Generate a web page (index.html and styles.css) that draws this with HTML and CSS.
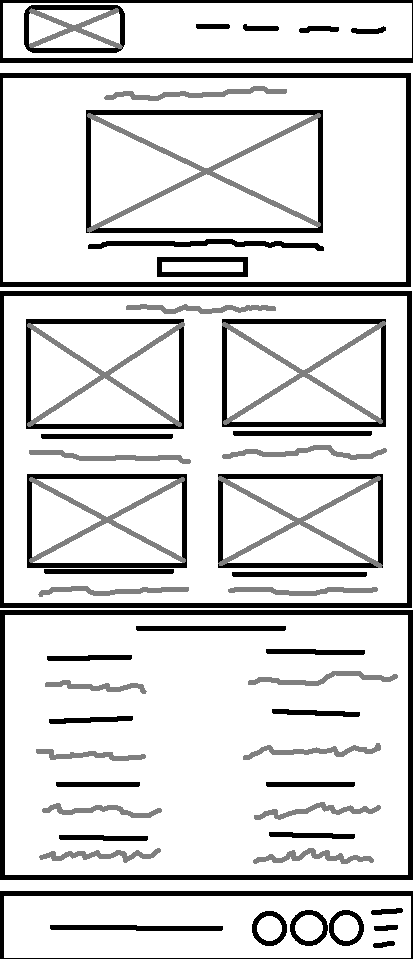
FILE: index.html
```html
<!DOCTYPE html>
<html lang="en">
<head>
<meta charset="utf-8">
<meta name="viewport" content="width=device-width, initial-scale=1">
<title>Wireframe</title>
<link rel="stylesheet" href="styles.css">
</head>
<body>
<header class="site-header">
  <a class="logo" href="#" aria-label="Home"><svg viewBox="9 9 381 165"><rect class="ink" x="80" y="22" width="287" height="129" rx="25"/><path class="pencil" d="M95 33L360 140M95 137L350 32"/></svg></a>
  <nav class="nav" aria-label="Main">
    <a class="nav-link" href="#" aria-label="Link 1"><svg viewBox="-72 9 159 165"><path class="ink" d="M-29 79H58"/></svg></a>
    <a class="nav-link" href="#" aria-label="Link 2"><svg viewBox="87 9 159 165"><path class="ink" d="M112 80L113 85H205"/></svg></a>
    <a class="nav-link" href="#" aria-label="Link 3"><svg viewBox="246 9 159 165"><path class="ink" d="M281 92H298L306 85H362L370 88H386"/></svg></a>
    <a class="nav-link" href="#" aria-label="Link 4"><svg viewBox="405 9 159 165"><path class="ink" d="M437 91L450 94H508L521 91L527 87"/></svg></a>
  </nav>
</header>

<main>
  <section class="hero">
    <h1><svg viewBox="-201 -6 1197 90"><path class="pencil" d="M110 53L130 52 140 44 158 44 165 40 185 40 190 52 235 52 240 56 260 56 275 50 285 43 325 43 340 40 358 46 395 46 402 43 460 43 475 34 540 34 553 26 582 26 592 34 645 34"/></svg></h1>
    <figure><svg viewBox="-201 84 1197 384"><rect class="ink" x="55.5" y="97.5" width="696" height="354"/><path class="pencil" d="M58 106L745 434M58 450L746 106"/></svg></figure>
    <p><svg viewBox="-201 468 1197 54"><path class="ink" d="M60 500L92 500 100 494 118 490 310 490 315 493 358 493 365 490 408 490 413 484 485 484 500 493 520 493 527 490 582 490 600 497 618 490 632 490 640 496 740 496 745 506 755 506"/></svg></p>
    <button class="cta" type="button" aria-label="Open"></button>
  </section>

  <section class="gallery">
    <h2><svg viewBox="12 33 1209 66"><path class="pencil" d="M384 68L418 68 425 64 450 67 485 67 495 79 525 79 540 72 557 65 563 71 595 71 603 79 624 79 664 76 680 68 700 69 718 76 738 72 742 67 750 70 765 67 780 70 795 66 805 71 821 71"/></svg></h2>
    <div class="columns">
      <article>
        <figure><svg viewBox="12 99 597 336"><rect class="ink" x="85.5" y="109.5" width="459" height="315"/><path class="pencil" d="M88 121L539 419M88 419L548 118"/></svg></figure>
        <h3><svg viewBox="12 435 597 36"><path class="ink" d="M130 454H512"/></svg></h3>
        <p><svg viewBox="12 471 597 93"><path class="pencil" d="M94 502L185 502 193 510 220 513 240 520 345 520 352 517 403 517 408 520 475 520 480 517 538 517 545 528 566 530"/></svg></p>
      </article>
      <article>
        <figure><svg viewBox="-15 99 612 336"><rect class="ink" x="49.5" y="109.5" width="477" height="309"/><path class="pencil" d="M50 118L518 409M52 413L527 115"/></svg></figure>
        <h3><svg viewBox="-15 435 612 36"><path class="ink" d="M82 445H485"/></svg></h3>
        <p><svg viewBox="-15 471 612 93"><path class="pencil" d="M50 515L65 515 75 508 105 506 115 499 145 499 165 508 230 508 240 505 265 505 270 497 300 495 320 488 363 487 375 503 390 509 420 511 430 518 440 518 450 515 490 514 505 505 518 502 530 497"/></svg></p>
      </article>
      <article>
        <figure><svg viewBox="12 99 597 285"><rect class="ink" x="88.5" y="109.5" width="465" height="267"/><path class="pencil" d="M94 118L551 362M94 362L548 118"/></svg></figure>
        <h3><svg viewBox="12 384 597 36"><path class="ink" d="M139 394H515"/></svg></h3>
        <p><svg viewBox="12 420 597 69"><path class="pencil" d="M123 464L127 458 150 456 158 449 210 449 220 445 258 445 270 455 282 460 325 460 350 455 420 454 432 447 445 451 482 451 490 448 560 448"/></svg></p>
      </article>
      <article>
        <figure><svg viewBox="-15 99 612 285"><rect class="ink" x="37.5" y="109.5" width="480" height="267"/><path class="pencil" d="M37 115L516 377M39 371L512 115"/></svg></figure>
        <h3><svg viewBox="-15 384 612 36"><path class="ink" d="M79 403H470"/></svg></h3>
        <p><svg viewBox="-15 420 612 69"><path class="pencil" d="M68 452L85 449 190 449 205 457 240 458 250 461 320 461 335 456 352 455 362 448 403 448 408 451 490 451 503 448"/></svg></p>
      </article>
    </div>
  </section>

  <section class="details">
    <h2><svg viewBox="15 30 1209 75"><path class="ink" d="M415 70H851"/></svg></h2>
    <div class="columns">
      <article>
        <h3><svg viewBox="15 105 597 84"><path class="ink" d="M148 160L265 160 270 157 390 157"/></svg></h3>
        <p><svg viewBox="15 189 597 111"><path class="pencil" d="M142 239L182 239 190 232 205 232 208 244 270 244 277 251 295 251 305 247 322 241 325 253 358 253 375 248 390 244 398 240 425 245 428 258 432 260"/></svg></p>
      </article>
      <article>
        <h3><svg viewBox="-12 105 612 84"><path class="ink" d="M181 139L320 139 325 142 464 142"/></svg></h3>
        <p><svg viewBox="-12 189 612 111"><path class="pencil" d="M127 233L145 231 155 223 185 223 195 227 210 227 215 232 290 232 295 235 330 235 345 228 355 217 368 211 380 204 453 205 465 217 518 217 527 224 545 223 562 214"/></svg></p>
      </article>
      <article>
        <h3><svg viewBox="15 300 597 84"><path class="ink" d="M154 349L195 349 198 346 270 346 275 343 350 343 355 340 392 340"/></svg></h3>
        <p><svg viewBox="15 384 597 105"><path class="pencil" d="M115 439L154 439 156 458 180 454 212 454 216 448 222 451 250 450 265 447 280 444 290 451 310 451 318 447 332 447 335 458 345 461 380 461 390 457 420 457 431 454"/></svg></p>
      </article>
      <article>
        <h3><svg viewBox="-12 300 612 84"><path class="ink" d="M199 319L238 319 242 322 322 322 326 325 405 325 410 328 450 328"/></svg></h3>
        <p><svg viewBox="-12 384 612 105"><path class="pencil" d="M112 458L123 457 135 448 150 444 165 433 183 427 197 442 255 442 262 438 280 439 295 443 325 435 340 440 365 437 380 430 387 448 403 448 420 437 440 428 455 433 470 432 475 440 490 440 505 432 510 421 512 430"/></svg></p>
      </article>
      <article>
        <h3><svg viewBox="15 99 597 84"><path class="ink" d="M175 148H413"/></svg></h3>
        <p><svg viewBox="15 183 597 78"><path class="pencil" d="M134 227L145 226 155 218 175 211 180 229 190 232 215 232 228 226 275 226 285 219 298 216 310 223 325 218 345 216 362 222 368 232 385 234 398 241 448 241 465 231 479 226"/></svg></p>
      </article>
      <article>
        <h3><svg viewBox="-12 99 612 84"><path class="ink" d="M181 148H434"/></svg></h3>
        <p><svg viewBox="-12 183 612 78"><path class="pencil" d="M145 247L160 246 172 236 190 232 202 229 205 245 215 247 245 236 262 231 295 229 315 218 328 212 345 208 350 222 372 216 376 230 392 232 410 224 428 219 438 230 455 229 472 220 480 228 495 228 512 218"/></svg></p>
      </article>
      <article>
        <h3><svg viewBox="15 261 597 63"><path class="ink" d="M184 307L308 307 313 310 437 310"/></svg></h3>
        <p><svg viewBox="15 324 597 96"><path class="pencil" d="M125 367L140 363 160 355 162 371 180 372 198 360 210 355 218 363 235 356 250 355 255 368 275 360 292 353 300 364 335 363 355 352 373 357 376 376 395 366 412 353 430 364 455 363 468 350 476 347"/></svg></p>
      </article>
      <article>
        <h3><svg viewBox="-12 261 612 63"><path class="ink" d="M190 298L250 298 255 301 370 301 375 304 434 304"/></svg></h3>
        <p><svg viewBox="-12 324 612 96"><path class="pencil" d="M143 380L152 374 175 372 190 364 200 376 225 375 240 366 243 358 256 353 258 371 275 369 290 356 305 347 315 347 318 363 335 363 345 356 358 352 360 370 380 372 398 362 405 380 415 380 430 370 445 367 455 373 485 370 490 376"/></svg></p>
      </article>
    </div>
  </section>
</main>

<footer class="site-footer">
  <p class="copyright"><svg viewBox="12 483 732 186"><path class="ink" d="M157 577L405 577 412 580 662 580"/></svg></p>
  <a class="social social-first" href="#" aria-label="Social 1"><svg viewBox="120 483 123 186"><circle class="ink" cx="184.5" cy="580.5" r="45"/></svg></a>
  <a class="social" href="#" aria-label="Social 2"><svg viewBox="243 483 117 186"><ellipse class="ink" cx="303" cy="579" rx="49" ry="46.5"/></svg></a>
  <a class="social" href="#" aria-label="Social 3"><svg viewBox="360 483 117 186"><ellipse class="ink" cx="415" cy="579" rx="45.5" ry="46.5"/></svg></a>
  <button class="menu" type="button" aria-label="Menu"><svg viewBox="477 483 132 186"><path class="ink" d="M497 533L518 532 525 529 560 529 578 526M505 580L535 580 540 577 563 577M503 632L520 631 530 628 554 625"/></svg></button>
</footer>
</body>
</html>
```

FILE: styles.css
```css
:root {
  --ink: #000;
  --pencil: #7f7f7f;
}

* {
  box-sizing: border-box;
}

body,
h1,
h2,
h3,
p,
figure {
  margin: 0;
}

body {
  background: #fff;
  font-family: "Liberation Sans", sans-serif;
}

button {
  padding: 0;
  border: 0;
  background: none;
}

/* Drawings use three units to the pixel, so a 15-unit stroke is 5px wide. */
svg {
  display: block;
  width: 100%;
  height: auto;
  overflow: visible;
  shape-rendering: crispEdges;
}

.ink,
.pencil {
  fill: none;
  stroke: var(--ink);
  stroke-width: 15;
  stroke-linecap: round;
}

.pencil {
  stroke: var(--pencil);
}

path {
  stroke-linejoin: round;
}

.site-header,
.hero,
.gallery,
.details,
.site-footer {
  border: 5px solid var(--ink);
}

.site-header {
  display: flex;
  align-items: center;
  justify-content: space-between;
  margin-right: 3px;
  margin-bottom: 10px;
  padding-right: 16px;
  border-width: 3px 1px 5px 3px;
}

.logo {
  width: 127px;
}

.nav {
  display: flex;
}

.nav-link {
  width: 53px;
}

.hero {
  margin-right: 5px;
  margin-bottom: 4px;
  padding: 0 4px 5px 0;
  border-left-width: 3px;
}

.cta {
  display: block;
  width: 91px;
  height: 20px;
  margin: 3px auto 0;
  border: 5px solid var(--ink);
}

.gallery {
  margin-right: 4px;
  margin-bottom: 2px;
  border-left-width: 4px;
}

.columns {
  display: grid;
  grid-template-columns: 199fr 204fr;
}

.details {
  margin-right: 3px;
  margin-bottom: 11px;
}

.site-footer {
  display: flex;
  align-items: center;
  margin-right: 3px;
  border-width: 5px 2px 1px 4px;
}

.copyright {
  flex: 1;
}

.social {
  width: 39px;
}

.social-first {
  width: 41px;
}

.menu {
  width: 44px;
}
```
